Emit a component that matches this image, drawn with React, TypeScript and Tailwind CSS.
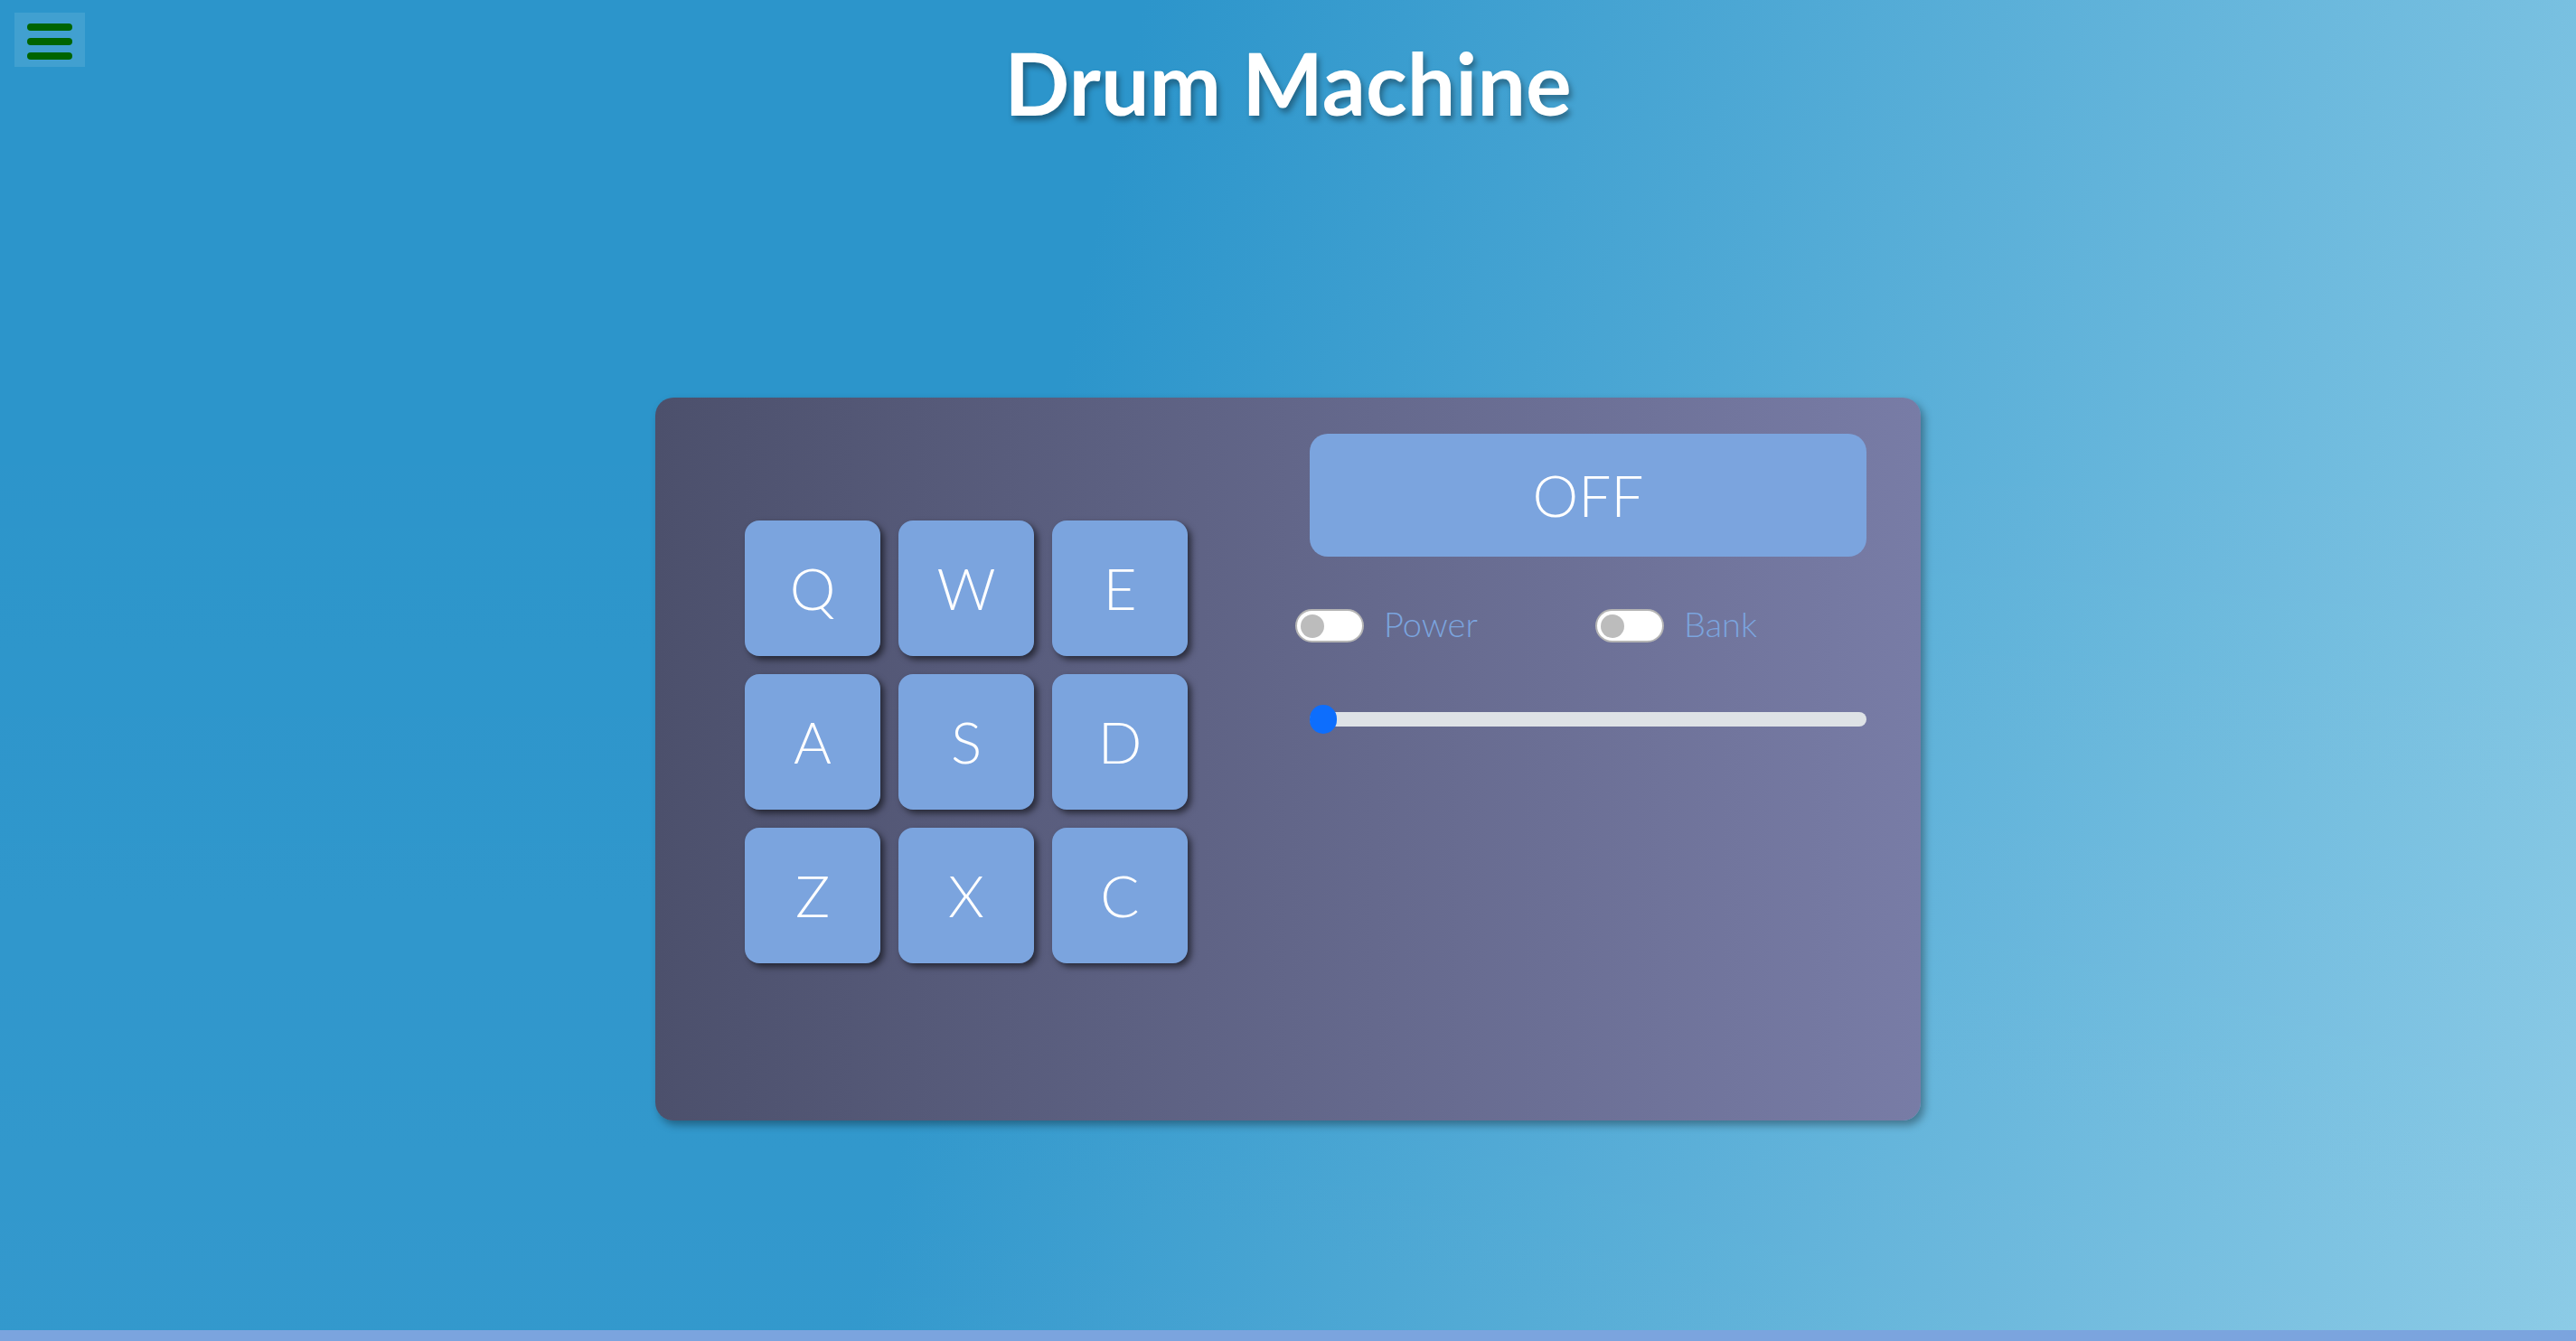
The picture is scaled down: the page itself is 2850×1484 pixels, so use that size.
import { useState } from "react";

const PADS = ["Q", "W", "E", "A", "S", "D", "Z", "X", "C"];

function Toggle({ label, on, onClick }: { label: string; on: boolean; onClick: () => void }) {
  return (
    <div className="flex h-[37px] w-[332px] shrink-0 items-center gap-[22px]">
      <button
        onClick={onClick}
        className="flex h-[37px] w-[76px] items-center rounded-full border-2 border-[#b4b4b4] bg-white px-[4px]"
      >
        <span
          className={
            on
              ? "ml-auto block h-[26px] w-[26px] rounded-full bg-[#7ba4de]"
              : "block h-[26px] w-[26px] rounded-full bg-[#bcbcbc]"
          }
        />
      </button>
      <span className="-mt-[6px] text-[38px] leading-none font-light text-[#7ba4de]">{label}</span>
    </div>
  );
}

export default function App() {
  const [power, setPower] = useState(false);
  const [bank, setBank] = useState(false);
  const [volume, setVolume] = useState(0);

  return (
    <div className="relative flex min-h-[1484px] flex-col bg-[linear-gradient(to_bottom,transparent_30%,rgba(255,255,255,0.035)),linear-gradient(102deg,#2c95cb_40%,#88c9e5_100%)] font-['Lato','Noto_Sans',sans-serif]">
      <button className="absolute top-[14px] left-[16px] flex h-[60px] w-[78px] flex-col gap-[8px] bg-white/10 pt-[12px] pl-[14px]">
        <span className="block h-[8px] w-[50px] rounded-full bg-[#006400]" />
        <span className="block h-[8px] w-[50px] rounded-full bg-[#006400]" />
        <span className="block h-[8px] w-[50px] rounded-full bg-[#006400]" />
      </button>

      <main className="flex h-[1472px] flex-col items-center">
        <h1 className="mt-[44px] text-[95px] leading-none font-bold text-white [text-shadow:3px_5px_6px_rgba(0,0,0,0.35)]">
          Drum Machine
        </h1>

        <section className="mt-[301px] flex h-[800px] w-[1400px] rounded-[20px] bg-[linear-gradient(to_right,#4c506c,#787ca6)] pt-[40px] pl-[99px] shadow-[4px_5px_10px_rgba(0,0,0,0.35)]">
          <div className="mt-[96px] grid h-fit grid-cols-[repeat(3,150px)] gap-[20px]">
            {PADS.map((key) => (
              <button
                key={key}
                className="flex h-[150px] w-[150px] items-center justify-center rounded-[16px] bg-[#7ba4de] text-[64px] leading-none font-light text-white shadow-[4px_4px_7px_rgba(0,0,0,0.55)]"
              >
                {key}
              </button>
            ))}
          </div>

          <div className="ml-[135px] flex w-[616px] flex-col">
            <div className="flex h-[136px] items-center justify-center rounded-[20px] bg-[#7ba4de] text-[64px] leading-none font-light text-white">
              {power ? "ON" : "OFF"}
            </div>

            <div className="mt-[58px] -ml-[16px] flex">
              <Toggle label="Power" on={power} onClick={() => setPower((p) => !p)} />
              <Toggle label="Bank" on={bank} onClick={() => setBank((b) => !b)} />
            </div>

            <div className="relative mt-[69px] flex h-[32px] items-center">
              <div className="h-[16px] w-full rounded-full bg-[#dee2e6]" />
              <span
                className="absolute top-0 block h-[32px] w-[30px] rounded-full bg-[#0d6efd]"
                style={{ left: `${(volume / 100) * 586}px` }}
              />
              <input
                type="range"
                min={0}
                max={100}
                value={volume}
                onChange={(e) => setVolume(Number(e.target.value))}
                className="absolute inset-0 opacity-0"
              />
            </div>
          </div>
        </section>
      </main>

      <div className="h-[12px] bg-[#7ba4de]" />
    </div>
  );
}
